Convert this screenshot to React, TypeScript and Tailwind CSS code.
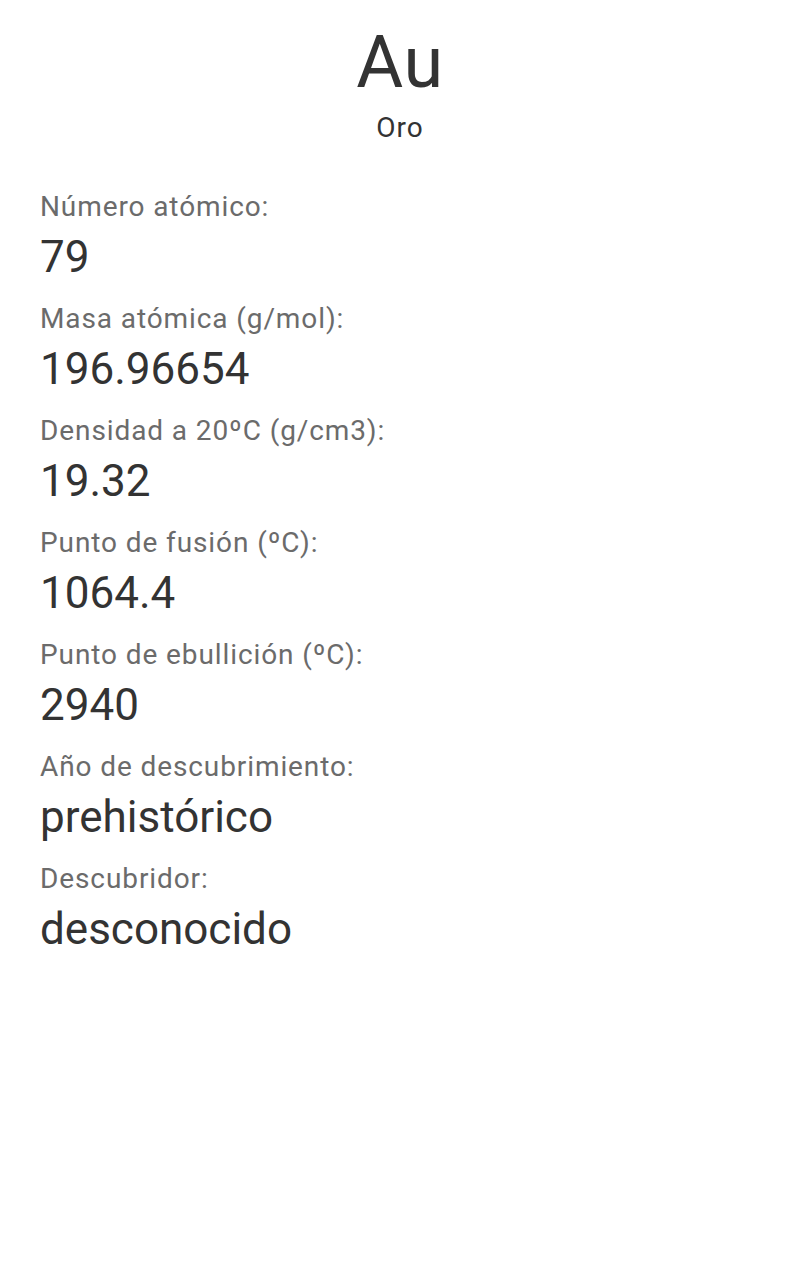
const rows: { label: string; value: string }[] = [
  { label: "Número atómico:", value: "79" },
  { label: "Masa atómica (g/mol):", value: "196.96654" },
  { label: "Densidad a 20ºC (g/cm3):", value: "19.32" },
  { label: "Punto de fusión (ºC):", value: "1064.4" },
  { label: "Punto de ebullición (ºC):", value: "2940" },
  { label: "Año de descubrimiento:", value: "prehistórico" },
  { label: "Descubridor:", value: "desconocido" },
]

const App: React.FC = () => {
  return (
    <div className="w-[800px] h-[1280px] bg-white font-['Roboto',sans-serif]">
      <div className="flex flex-col items-center pt-[27px]">
        <div className="text-[72px] leading-[72px] tracking-[0.5px] text-[#333333]">Au</div>
        <div className="mt-[13px] text-[28px] leading-[32px] tracking-[1px] text-[#333333]">Oro</div>
      </div>

      <div className="flex flex-col px-[40px] pt-[38px]">
        {rows.map((row) => (
          <div key={row.label} className="flex flex-col">
            <div className="text-[28px] leading-[49px] tracking-[0.9px] text-[#6b6b6b]">{row.label}</div>
            <div className="text-[44px] leading-[52px] mb-[11px] text-[#333333]">{row.value}</div>
          </div>
        ))}
      </div>
    </div>
  )
}

export default App;
